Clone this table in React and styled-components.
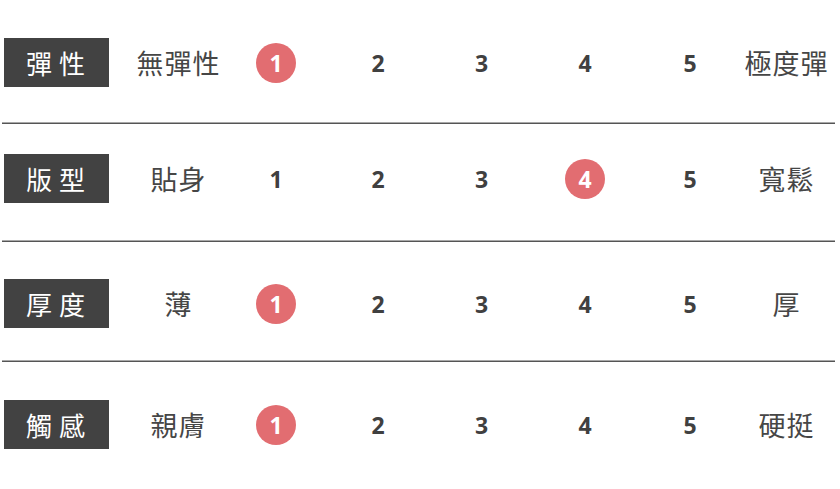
import styled, { createGlobalStyle } from "styled-components";

const GlobalStyle = createGlobalStyle`
  html, body {
    margin: 0;
    padding: 0;
    background: #ffffff;
  }
  body {
    font-family: "Noto Sans CJK TC", "Noto Sans", sans-serif;
  }
`;

const rows = [
  { label: "彈性", low: "無彈性", high: "極度彈", active: 1, top: 38, bottom: 35 },
  { label: "版型", low: "貼身", high: "寬鬆", active: 4, top: 30, bottom: 37 },
  { label: "厚度", low: "薄", high: "厚", active: 1, top: 37, bottom: 32 },
  { label: "觸感", low: "親膚", high: "硬挺", active: 1, top: 38, bottom: 0 },
];

const Page = styled.div`
  width: 840px;
  height: 489px;
  overflow: hidden;
`;

const Row = styled.div`
  display: grid;
  grid-template-columns: 105px 21px 96px 100px 104px 103px 104px 106px 86px;
  align-items: center;
  padding: ${(p) => p.$top}px 0 ${(p) => p.$bottom}px 4px;
`;

const Label = styled.div`
  height: 49px;
  background: #424242;
  color: #ffffff;
  display: flex;
  align-items: center;
  justify-content: center;
  font-size: 26px;
  letter-spacing: 7px;
  padding-left: 5px;
  box-sizing: border-box;
`;

const Word = styled.div`
  grid-column: ${(p) => p.$col};
  text-align: center;
  color: #464646;
  font-size: 27px;
  letter-spacing: 1px;
  padding-left: 1px;
  white-space: nowrap;
`;

const Cell = styled.div`
  display: flex;
  justify-content: center;
  align-items: center;
`;

const Num = styled.span`
  width: 40px;
  height: 40px;
  border-radius: 50%;
  display: flex;
  align-items: center;
  justify-content: center;
  font-family: "Open Sans", sans-serif;
  font-weight: 700;
  font-size: 23px;
  color: ${(p) => (p.$on ? "#ffffff" : "#404040")};
  background: ${(p) => (p.$on ? "#e26d71" : "transparent")};
`;

const Divider = styled.div`
  height: 2px;
  margin: 0 5px 0 2px;
  border-top: 1px solid #a8a8a8;
  background: #555555;
  box-sizing: border-box;
`;

export default function App() {
  return (
    <>
      <GlobalStyle />
      <Page>
        {rows.map((row, i) => (
          <div key={row.label}>
            <Row $top={row.top} $bottom={row.bottom}>
              <Label>{row.label}</Label>
              <Word $col={3}>{row.low}</Word>
              {[1, 2, 3, 4, 5].map((n) => (
                <Cell key={n}>
                  <Num $on={n === row.active}>{n}</Num>
                </Cell>
              ))}
              <Word $col={9}>{row.high}</Word>
            </Row>
            {i < rows.length - 1 && <Divider />}
          </div>
        ))}
      </Page>
    </>
  );
}
